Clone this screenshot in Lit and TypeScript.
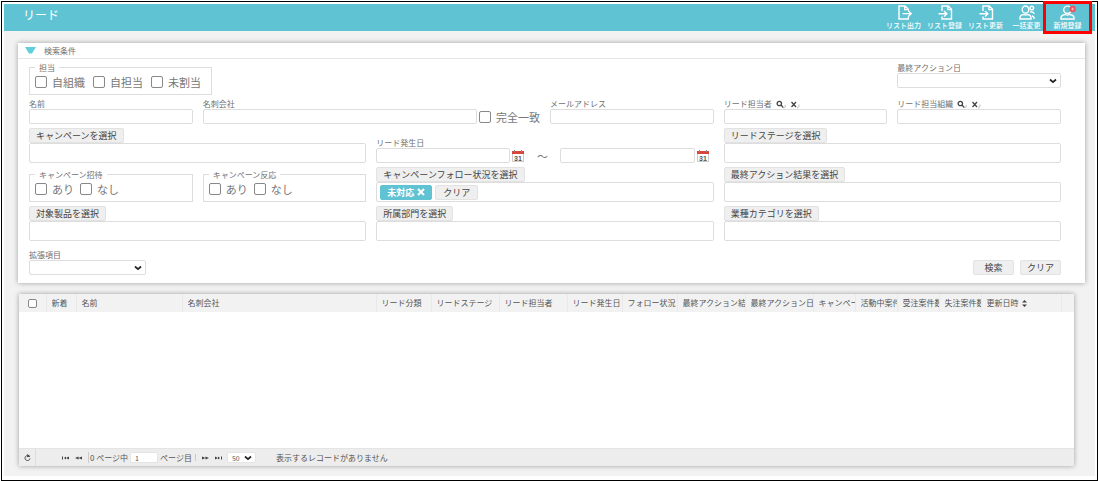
import { LitElement, html, css, svg, nothing } from "lit";
import { customElement, property } from "lit/decorators.js";

const icons: Record<string, unknown> = {
  export: svg`<path d="M12.300 5.500V4.300L9 1H3v13h9.300v-2.200M8.700 1v3.600h3.600M6.500 8.600h8.500M12.300 5.800L15.200 8.600L12.300 11.400"/>`,
  import: svg`<path d="M5 6V1h6.200L14.500 4.300V14H5v-2.500M10.900 1v3.600h3.600M1.500 8.700h8.300M7 5.900L9.900 8.700L7 11.500"/>`,
  people: svg`<ellipse cx="6.500" cy="4.600" rx="3.300" ry="3.600"/><path d="M1 14v-1.300C1 10.800 2.500 9.800 4.800 9.500q1.700 1.200 3.400 0C10.500 9.800 12 10.800 12 12.700V14z"/><circle cx="12.800" cy="3" r="1.800"/><path d="M11 7.200c2-.9 4-.1 4 1.800M13 11c1.500.3 2.200 1.300 2.200 3"/>`,
  personAdd: svg`<ellipse cx="7.500" cy="4.800" rx="3.800" ry="3.700"/><path d="M1 14v-1.300C1 11 2.600 9.900 5.500 9.500q2 1.300 4 0C12.400 9.900 14 11 14 12.700V14z"/><circle class="badge" cx="12.600" cy="4" r="3.200"/><path class="thin" d="M11.200 4h2.800M12.600 2.600v2.800"/>`,
};

const sheet = css`
  :host {
    font-family: "Noto Sans CJK JP", "Noto Sans", sans-serif;
    color: #707070;
  }
  * {
    box-sizing: border-box;
  }
  button,
  input,
  select {
    font-family: inherit;
    color: inherit;
    margin: 0;
  }
  input[type="checkbox"] {
    appearance: none;
    flex: none;
    width: 12px;
    height: 12px;
    border: 1px solid #888;
    border-radius: 2px;
    background: #fff;
  }
  input[type="checkbox"]:checked {
    background: #60c3d3;
  }
  .field {
    display: block;
    width: 100%;
    min-width: 0;
    height: 15px;
    padding: 0 4px;
    border: 1px solid #ddd;
    border-radius: 2px;
    background: #fff;
    font-size: 9px;
  }
  select {
    appearance: none;
    background: #fff
      url("data:image/svg+xml,%3Csvg xmlns='http://www.w3.org/2000/svg' width='8' height='6'%3E%3Cpath d='M1 1.500L4 4.200L7 1.500' fill='none' stroke='%23222' stroke-width='1.700'/%3E%3C/svg%3E")
      no-repeat right 3px center !important;
  }
  .btn {
    height: 15px;
    padding: 0 6px;
    border: 1px solid #e2e2e2;
    border-radius: 2px;
    background: #efefef;
    color: #444;
    font-size: 9px;
    line-height: 13px;
    white-space: nowrap;
  }
`;

@customElement("lead-header")
class LeadHeader extends LitElement {
  static styles = [
    sheet,
    css`
      :host {
        display: flex;
        justify-content: space-between;
        height: 27px;
        padding: 0 7px 0 19px;
        background: #60c3d3;
        color: #fff;
      }
      h1 {
        margin: 0;
        font-size: 12px;
        font-weight: 400;
        line-height: 22px;
      }
      nav {
        display: flex;
      }
      .action {
        position: relative;
        display: flex;
        flex-direction: column;
        align-items: center;
        width: 41px;
        padding: 1px 0 0;
        border: 0;
        background: none;
        color: #fff;
        font-size: 7px;
        font-weight: 500;
        line-height: 10px;
        white-space: nowrap;
      }
      .action svg {
        width: 16px;
        height: 15px;
        flex: none;
        fill: none;
        stroke: #fff;
        stroke-width: 1.4;
      }
      .action .badge {
        fill: #ee5562;
        stroke: none;
      }
      .action .thin {
        stroke: #ffc9cd;
        stroke-width: 0.8;
      }
      .marked::after {
        content: "";
        position: absolute;
        inset: -3px -4px;
        border: 3px solid #f00;
      }
    `,
  ];
  render() {
    const actions = [
      ["export", "リスト出力"],
      ["import", "リスト登録"],
      ["import", "リスト更新"],
      ["people", "一括変更"],
      ["personAdd", "新規登録"],
    ];
    return html`<h1>リード</h1>
      <nav>
        ${actions.map(
          ([icon, text]) => html`<button class="action ${icon === "personAdd" ? "marked" : ""}">
            <svg viewBox="0 0 16 15" aria-hidden="true">${icons[icon]}</svg>${text}
          </button>`
        )}
      </nav>`;
  }
}

@customElement("pick-box")
class PickBox extends LitElement {
  @property() label = "";
  @property() tag = "";
  static styles = [
    sheet,
    css`
      :host {
        display: block;
        grid-column: span 2;
      }
      .open {
        display: block;
      }
      .box {
        display: flex;
        align-items: center;
        gap: 3px;
        height: 20px;
        padding: 0 3px;
        border: 1px solid #ddd;
        border-radius: 2px;
        background: #fff;
      }
      .clear {
        padding: 0 7px;
      }
      .tag {
        display: flex;
        align-items: center;
        gap: 3px;
        border-color: #60c3d3;
        background: #60c3d3;
        color: #fff;
        font-weight: 700;
      }
      .tag svg {
        width: 8px;
        height: 8px;
        stroke: #fff;
        stroke-width: 2;
      }
    `,
  ];
  render() {
    return html`<button class="btn open">${this.label}</button>
      <div class="box">
        ${this.tag
          ? html`<button class="btn tag">${this.tag}<svg viewBox="0 0 8 8" aria-hidden="true"><path d="M1 1l6 6M7 1L1 7" /></svg></button>
              <button class="btn clear">クリア</button>`
          : nothing}
      </div>`;
  }
}

@customElement("search-panel")
class SearchPanel extends LitElement {
  static styles = [
    sheet,
    css`
      :host {
        display: block;
        background: #fff;
        box-shadow: 0 0 5px rgba(0, 0, 0, 0.35);
      }
      h2 {
        display: flex;
        align-items: center;
        gap: 8px;
        margin: 0;
        height: 16px;
        padding-left: 7px;
        border-bottom: 1px solid #e6e6e6;
        font-size: 8px;
        font-weight: 400;
      }
      h2 svg {
        width: 11px;
        height: 7px;
        fill: #60cfdc;
      }
      .form {
        display: grid;
        grid-template-columns: repeat(6, minmax(0, 1fr));
        gap: 4px 10px;
        align-items: end;
        padding: 4px 24px 8px 11px;
      }
      .wide {
        grid-column: span 2;
      }
      .last {
        grid-column: 6;
        align-self: start;
      }
      .caption {
        display: flex;
        align-items: center;
        gap: 4px;
        height: 10px;
        font-size: 8px;
        line-height: 10px;
        white-space: nowrap;
      }
      fieldset {
        min-width: 0;
        margin: 0;
        padding: 4px 5px 6px;
        border: 1px solid #ddd;
      }
      .owner {
        grid-column: span 2;
        justify-self: start;
        padding-right: 10px;
      }
      .owner .checks {
        gap: 8px;
      }
      legend {
        height: 9px;
        padding: 0 4px;
        font-size: 8px;
        line-height: 9px;
      }
      .checks {
        display: flex;
        gap: 6px;
        height: 12px;
      }
      .check {
        display: flex;
        align-items: center;
        gap: 5px;
        font-size: 11px;
        line-height: 12px;
        white-space: nowrap;
        color: #777;
      }
      .line {
        display: flex;
        align-items: center;
        gap: 2px;
      }
      .dates {
        padding-right: 5px;
      }
      .tilde {
        flex: none;
        width: 32px;
        text-align: center;
        font-size: 11px;
        line-height: 12px;
      }
      .icon {
        flex: none;
        display: flex;
        padding: 0;
        border: 0;
        background: none;
      }
      .icon svg {
        width: 10px;
        height: 9px;
        fill: none;
        stroke: #444;
        stroke-width: 1.3;
      }
      .icon .shade {
        stroke: #bbb;
        stroke-width: 1;
      }
      .icon .cal {
        width: 12px;
        height: 12px;
        stroke: none;
      }
      .cal text {
        fill: #555;
        font: 700 7px "Liberation Sans", sans-serif;
      }
      .extra {
        padding-top: 5px;
      }
      .extra .field {
        width: 117px;
      }
      .submit {
        grid-column: 6;
        display: flex;
        justify-content: flex-end;
        gap: 6px;
      }
      .submit .btn {
        width: 41px;
      }
    `,
  ];
  check(text: string) {
    return html`<label class="check"><input type="checkbox" />${text}</label>`;
  }
  text(id: string, label: string, lookup = false) {
    return html`<div>
      <div class="caption">
        <label for=${id}>${label}</label>
        ${lookup
          ? html`<button class="icon" aria-label="検索"><svg viewBox="0 0 10 9"><circle cx="3.300" cy="3.500" r="2.200" /><path d="M5 5l2.300 2.600" /><path class="shade" d="M7.800 8.300c1.200-.7 1.700-2 1.400-3.500" /></svg></button>
              <button class="icon" aria-label="クリア"><svg viewBox="0 0 10 9"><path d="M1.500 2l4.500 5M6 2l-4.500 5" /><path class="shade" d="M7 8.300c1.500-.7 2.200-2 1.900-3.800" /></svg></button>`
          : nothing}
      </div>
      <input class="field" id=${id} type="text" />
    </div>`;
  }
  calendar() {
    return html`<button class="icon" aria-label="カレンダー">
      <svg class="cal" viewBox="0 0 12 12"><path fill="#ccc" d="M0 1h12v11H0z" /><path fill="#fff" d="M1 4h10v7H1z" /><path fill="#d9443c" d="M0 1h12v3H0z" /><path fill="#888" d="M2 0h1v2H2zM9 0h1v2H9z" /><text x="2" y="10.500">31</text></svg>
    </button>`;
  }
  render() {
    return html`<h2><svg viewBox="0 0 11 7" aria-hidden="true"><path d="M0 0h11L7 6.500H4z" /></svg>検索条件</h2>
      <div class="form">
        <fieldset class="owner">
          <legend>担当</legend>
          <div class="checks">${["自組織", "自担当", "未割当"].map((t) => this.check(t))}</div>
        </fieldset>
        <div class="last">
          <label class="caption" for="action-date">最終アクション日</label>
          <select class="field" id="action-date"></select>
        </div>

        ${this.text("name", "名前")}
        <div class="wide">
          <label class="caption" for="company">名刺会社</label>
          <div class="line"><input class="field" id="company" type="text" />${this.check("完全一致")}</div>
        </div>
        ${this.text("mail", "メールアドレス")} ${this.text("owner", "リード担当者", true)}
        ${this.text("team", "リード担当組織", true)}

        <pick-box label="キャンペーンを選択"></pick-box>
        <div class="wide dates">
          <label class="caption" for="from">リード発生日</label>
          <div class="line">
            <input class="field" id="from" type="text" />${this.calendar()}
            <span class="tilde">～</span>
            <input class="field" aria-label="リード発生日" type="text" />${this.calendar()}
          </div>
        </div>
        <pick-box label="リードステージを選択"></pick-box>

        ${["キャンペーン招待", "キャンペーン反応"].map(
          (t) => html`<fieldset>
            <legend>${t}</legend>
            <div class="checks">${this.check("あり")}${this.check("なし")}</div>
          </fieldset>`
        )}
        <pick-box label="キャンペーンフォロー状況を選択" tag="未対応"></pick-box>
        <pick-box label="最終アクション結果を選択"></pick-box>

        <pick-box label="対象製品を選択"></pick-box>
        <pick-box label="所属部門を選択"></pick-box>
        <pick-box label="業種カテゴリを選択"></pick-box>

        <div class="extra">
          <label class="caption" for="extra">拡張項目</label>
          <select class="field" id="extra"></select>
        </div>
        <div class="submit"><button class="btn">検索</button><button class="btn">クリア</button></div>
      </div>`;
  }
}

@customElement("lead-table")
class LeadTable extends LitElement {
  static styles = [
    sheet,
    css`
      :host {
        display: flex;
        flex-direction: column;
        justify-content: space-between;
        background: #fff;
        box-shadow: 0 0 5px rgba(0, 0, 0, 0.35);
      }
      table {
        width: 100%;
        table-layout: fixed;
        border-collapse: collapse;
        background: #f2f2f2;
        color: #555;
        font-size: 8px;
      }
      th {
        height: 18px;
        padding: 0 0 0 5px;
        border-right: 1px solid #e9e9e9;
        font-weight: 400;
        line-height: 12px;
        text-align: left;
      }
      th:last-child {
        border: 0;
      }
      .cell {
        display: block;
        overflow: hidden;
        white-space: nowrap;
      }
      th input[type="checkbox"] {
        display: block;
        width: 9px;
        height: 9px;
        margin-left: 4px;
      }
      .sort {
        width: 5px;
        height: 7px;
        margin-left: 3px;
        fill: #444;
        vertical-align: middle;
      }
      .c27 { width: 27px; }
      .c30 { width: 30px; }
      .c42 { width: 42px; }
      .c55 { width: 55px; }
      .c68 { width: 68px; }
      .c80 { width: 80px; }
      .c106 { width: 106px; }
      .end { width: 13px; }
      footer {
        display: flex;
        align-items: center;
        height: 18px;
        background: #ededed;
        border-top: 1px solid #e4e4e4;
        color: #555;
        font-size: 8px;
        white-space: nowrap;
      }
      .tool {
        display: flex;
        padding: 0;
        border: 0;
        background: none;
      }
      .tool svg {
        width: 7px;
        height: 7px;
        fill: #444;
      }
      .reload {
        width: 17px;
        height: 17px;
        margin-right: 26px;
        justify-content: center;
        align-items: center;
        border-right: 1px solid #ddd;
      }
      .reload svg {
        fill: none;
        stroke: #444;
      }
      .pair {
        display: flex;
        gap: 6px;
        padding: 0 6px 0 0;
      }
      .next {
        padding: 0 5px 0 6px;
        border-left: 1px solid #ccc;
      }
      .count {
        display: flex;
        align-items: center;
        gap: 2px;
        padding: 0 3px 0 1px;
        border-left: 1px solid #ccc;
      }
      .small {
        height: 11px;
        font-size: 7px;
        border-color: #e4e4e4;
      }
      .page {
        width: 28px;
      }
      .size {
        width: 29px;
      }
      .message {
        margin-left: 20px;
      }
    `,
  ];
  tool(label: string, path: string) {
    return html`<button class="tool" aria-label=${label}><svg viewBox="0 0 7 7"><path d=${path} /></svg></button>`;
  }
  render() {
    const columns: [string, string][] = [
      ["c30", "新着"],
      ["c106", "名前"],
      ["", "名刺会社"],
      ["c55", "リード分類"],
      ["c68", "リードステージ"],
      ["c68", "リード担当者"],
      ["c55", "リード発生日"],
      ["c55", "フォロー状況"],
      ["c68", "最終アクション結果"],
      ["c68", "最終アクション日"],
      ["c42", "キャンペーン"],
      ["c42", "活動中案件数"],
      ["c42", "受注案件数"],
      ["c42", "失注案件数"],
    ];
    return html`<table>
        <thead>
          <tr>
            <th class="c27"><input type="checkbox" aria-label="すべて選択" /></th>
            ${columns.map(([size, text]) => html`<th class=${size}><span class="cell">${text}</span></th>`)}
            <th class="c80">更新日時<svg class="sort" viewBox="0 0 5 7" aria-hidden="true"><path d="M2.500 0L5 2.500H0zM2.500 7L5 4.500H0z" /></svg></th>
            <th class="end"></th>
          </tr>
        </thead>
      </table>
      <footer>
        <button class="tool reload" aria-label="更新"><svg viewBox="0 0 7 7"><path d="M5.500 2.500A2.500 2.500 0 1 0 6 4.500M3 .5L5.700 2.200L3 2.700" /></svg></button>
        <div class="pair">
          ${this.tool("最初", "M0 2.500h1v3H0zM4 2.500v3L2 4zM7 2.500v3L4 4z")}
          ${this.tool("前", "M3.500 2.500v3L0 4zM7 2.500v3L3.500 4z")}
        </div>
        <label class="count">0 ページ中 <input class="field small page" value="1" /> ページ目</label>
        <div class="pair next">
          ${this.tool("次", "M0 2.500v3l3.500-1.500zM3.500 2.500v3L7 4z")}
          ${this.tool("最後", "M0 2.500v3l3-1.500zM3 2.500v3l2-1.500zM6 2.500h1v3H6z")}
        </div>
        <select class="field small size" aria-label="表示件数"><option>50</option></select>
        <span class="message">表示するレコードがありません</span>
      </footer>`;
  }
}

@customElement("app-root")
class AppRoot extends LitElement {
  static styles = css`
    :host {
      display: flex;
      box-sizing: border-box;
      min-height: 100vh;
      padding: 1px 0 0 1px;
      background: #fff;
    }
    .frame {
      flex: 1;
      min-width: 0;
      display: flex;
      padding: 2px 2px 4px;
      border: 1px solid #000;
    }
    .page {
      flex: 1;
      min-width: 0;
      display: flex;
      flex-direction: column;
      background: #f2f2f2;
    }
    .search {
      margin: 12px 10px 0 14px;
    }
    .list {
      flex: 1;
      margin: 11px 21px 10px 15px;
    }
  `;
  render() {
    return html`<div class="frame">
      <main class="page">
        <lead-header></lead-header>
        <search-panel class="search"></search-panel>
        <lead-table class="list"></lead-table>
      </main>
    </div>`;
  }
}
